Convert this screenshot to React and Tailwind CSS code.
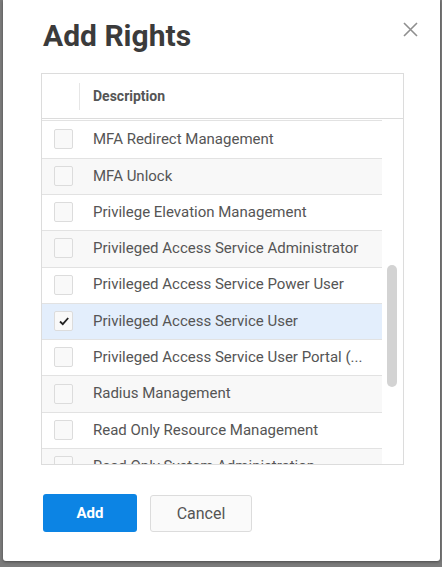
import React from "react";

const rows = [
  { t: "MFA Redirect Management" },
  { t: "MFA Unlock" },
  { t: "Privilege Elevation Management" },
  { t: "Privileged Access Service Administrator" },
  { t: "Privileged Access Service Power User" },
  { t: "Privileged Access Service User", checked: true },
  { t: "Privileged Access Service User Portal (..." },
  { t: "Radius Management" },
  { t: "Read Only Resource Management" },
  { t: "Read Only System Administration" },
];

export default function App() {
  return (
    <div
      className="w-[442px] h-[567px] bg-[#7b7b7b] overflow-hidden"
      style={{ fontFamily: "Roboto, 'Liberation Sans', sans-serif" }}
    >
      <div className="relative ml-[3px] w-[437px] h-[561px] bg-white rounded-b-[3px] shadow-[0_1px_3px_rgba(0,0,0,0.4)] flex flex-col">
        <div className="h-[73px] pt-[21px] pl-[40px]">
          <h1 className="text-[30px] leading-[30px] font-bold text-[#3b3b3b]">
            Add Rights
          </h1>
        </div>
        <button className="absolute top-[22px] right-[22px] w-[15px] h-[15px] text-[#8f8f8f]">
          <svg viewBox="0 0 15 15" width="15" height="15">
            <path d="M1 1 L14 14 M14 1 L1 14" stroke="currentColor" strokeWidth="1.6" fill="none" />
          </svg>
        </button>

        <div className="ml-[38px] w-[363px] h-[392px] border border-[#dcdcdc] flex flex-col overflow-hidden">
          <div className="h-[45px] shrink-0 border-b border-[#dcdcdc] flex items-center">
            <div className="w-[38px] h-[27px] border-r border-[#e6e6e6]" />
            <div className="pl-[13px] text-[14px] font-bold text-[#555]">Description</div>
          </div>
          <div className="flex-1 flex overflow-hidden pt-[1px]">
            <div className="w-[340px] overflow-hidden">
              {rows.map((r, i) => (
                <div
                  key={i}
                  className={
                    "flex items-center border-t border-[#e2e2e2] pl-[12px] pb-[1px] " +
                    (i === 0 ? "h-[37.7px] " : "h-[36.3px] ") +
                    (r.checked ? "bg-[#e3eefc]" : i % 2 === 1 ? "bg-[#f8f8f8]" : "bg-white")
                  }
                >
                  <div className="w-[19px] h-[20px] shrink-0 border border-[#dcdcdc] bg-[#f9f9f9] rounded-[2px] flex items-center justify-center">
                    {r.checked && (
                      <svg viewBox="0 0 12 12" width="12" height="12">
                        <path d="M2 6.5 L4.8 9.2 L10.2 3" stroke="#222" strokeWidth="1.8" fill="none" />
                      </svg>
                    )}
                  </div>
                  <span className="ml-[20px] text-[15px] text-[#555] whitespace-nowrap">{r.t}</span>
                </div>
              ))}
            </div>
            <div className="w-[20px] pl-[5px] pt-[145px]">
              <div className="w-[10px] h-[122px] rounded-full bg-[#d3d3d3]" />
            </div>
          </div>
        </div>

        <div className="mt-[29px] ml-[40px] flex items-start gap-[13px]">
          <button className="w-[94px] h-[38px] rounded-[3px] bg-[#0c84e4] text-white text-[15px] font-bold">
            Add
          </button>
          <button className="w-[102px] h-[37px] mt-[1px] rounded-[3px] border border-[#dcdcdc] bg-[#fafafa] text-[#555] text-[16px]">
            Cancel
          </button>
        </div>
      </div>
    </div>
  );
}
